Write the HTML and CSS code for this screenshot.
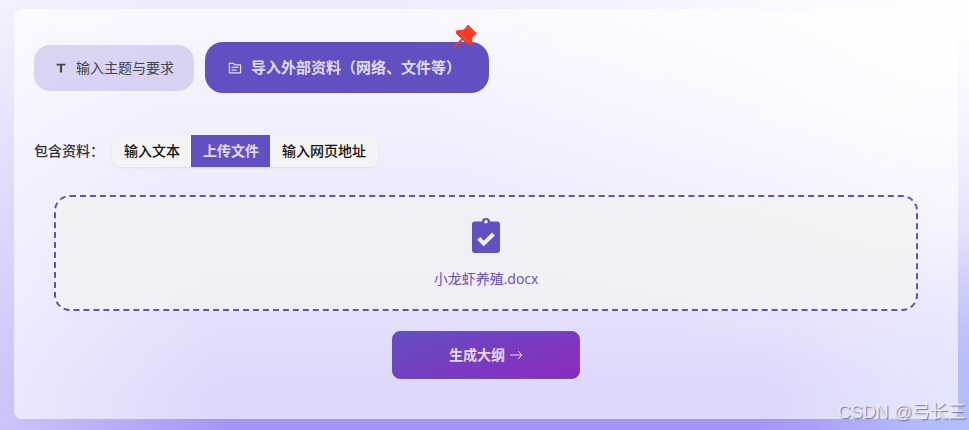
FILE: index.html
```html
<!DOCTYPE html>
<html lang="zh-CN">
<head>
<meta charset="utf-8">
<meta name="viewport" content="width=device-width, initial-scale=1">
<title>生成大纲</title>
<link rel="stylesheet" href="styles.css">
</head>
<body>
<main class="panel">
  <nav class="tabs">
    <button type="button" class="tab">
      <svg class="tab-icon" viewBox="0 0 16 16" aria-hidden="true"><path d="M3 3h10v2.200H9.200V13H6.800V5.200H3z" fill="currentColor"/></svg>
      输入主题与要求
    </button>
    <button type="button" class="tab tab-active">
      <svg class="tab-icon" viewBox="0 0 16 16" aria-hidden="true"><path d="M1.600 2.700h4.600l1.600 1.800h6.600v9H1.600zM4 7.200h8M4 10.300h5.500" fill="none" stroke="currentColor" stroke-width="1.400" stroke-linejoin="round"/></svg>
      导入外部资料（网络、文件等）
      <svg class="pin" viewBox="0 0 24 24" aria-hidden="true"><path d="M1 22.500 8 15.500" stroke="#f93822" stroke-width="2.200" stroke-linecap="round"/><path d="M14 1.200 22.300 9.300 18 13.500 16.700 21 11.500 18.200 2.500 9.500 2.300 7 10 6z" fill="#f93822" stroke="#f93822" stroke-linejoin="round"/><path d="M9.500 6.500 8 9.500M5 9 15.800 18.600M13.800 3.300 20.200 9.300" fill="none" stroke="#ff8a78" stroke-width=".5"/></svg>
    </button>
  </nav>

  <div class="source">
    <span class="source-label" id="source-label">包含资料：</span>
    <div class="segments" role="group" aria-labelledby="source-label">
      <button type="button" class="segment">输入文本</button>
      <button type="button" class="segment segment-active">上传文件</button>
      <button type="button" class="segment">输入网页地址</button>
    </div>
  </div>

  <button type="button" class="dropzone">
    <svg class="file-icon" viewBox="0 0 28 36" aria-hidden="true"><path fill="currentColor" fill-rule="evenodd" d="M3 4.500h6.700a4.400 4.400 0 0 1 8.600 0H25a3 3 0 0 1 3 3V33a3 3 0 0 1-3 3H3a3 3 0 0 1-3-3V7.500a3 3 0 0 1 3-3zM14 2.900a1.800 1.800 0 1 0 0 3.600 1.800 1.800 0 0 0 0-3.600zM5.200 22.800l6.500 6.500L23 18.400l-2.900-3-8.400 8.300-3.500-3.800z"/></svg>
    <span>小龙虾养殖.docx</span>
  </button>

  <button type="button" class="submit">
    生成大纲
    <svg class="arrow" viewBox="0 0 14 14" aria-hidden="true"><path d="M1 7h12M9 3l4 4-4 4" fill="none" stroke="currentColor"/></svg>
  </button>
</main>
<div class="watermark">CSDN @弓长三</div>
</body>
</html>
```
FILE: styles.css
```css
* {
  box-sizing: border-box;
}

body {
  margin: 0;
  min-height: 100vh;
  padding: 9px 11px 11px 14px;
  font: 14px/20px "Open Sans", "Noto Sans CJK SC", sans-serif;
  color: #303133;
  background:
    radial-gradient(ellipse 22% 45% at 100% 100%, #b2c0fc, rgba(178, 192, 252, 0)),
    linear-gradient(80deg, rgba(255, 255, 255, .45), rgba(255, 255, 255, 0) 22%),
    radial-gradient(ellipse 60% 90% at 100% 0%, rgba(255, 255, 255, .95), rgba(255, 255, 255, 0)),
    linear-gradient(260deg, rgba(255, 255, 255, .3), rgba(255, 255, 255, 0) 22%),
    linear-gradient(#efecfe 0%, #d9d2fb 32%, #bfb4f7 65%, #a797f4 92%, #a595f3 100%);
}

button {
  margin: 0;
  border: 0;
  font: inherit;
  color: inherit;
  cursor: pointer;
}

.panel {
  display: flex;
  flex-direction: column;
  padding: 33px 20px 40px;
  border-radius: 8px;
  background: rgba(255, 255, 255, .62);
}

.tabs {
  display: flex;
  align-items: center;
  gap: 11px;
}

.tab {
  position: relative;
  display: flex;
  align-items: center;
  gap: 8px;
  padding: 13px 20px;
  border-radius: 16px;
  color: #444;
  background: rgba(98, 79, 194, .2);
}

.tab-icon {
  width: 14px;
  height: 14px;
}

.tab-active {
  gap: 9px;
  padding: 16px 28px 16px 23px;
  border-radius: 18px;
  font-size: 15px;
  font-weight: 700;
  line-height: 19px;
  color: #e0dcf5;
  background: #624fc2;
}

.pin {
  position: absolute;
  top: -18px;
  right: 11px;
  width: 24px;
  height: 24px;
}

.source {
  display: flex;
  align-items: center;
  gap: 8px;
  margin-top: 42px;
}

.source-label {
  font-weight: 500;
}

.segments {
  display: flex;
  border-radius: 8px;
  box-shadow: 0 1px 2px rgba(0, 0, 0, .08);
}

.segment {
  padding: 6px 12px;
  font-weight: 500;
  color: #111;
  background: #f3f3f3;
}

.segment + .segment {
  margin-left: -1px;
}

.segment:first-child {
  border-radius: 8px 0 0 8px;
}

.segment:last-child {
  border-radius: 0 8px 8px 0;
}

.segment.segment-active {
  font-weight: 700;
  color: #e0dcf5;
  background: #624fc2;
}

.dropzone {
  display: flex;
  flex-direction: column;
  align-items: center;
  gap: 16px;
  margin: 28px 20px 20px;
  padding: 20px;
  border: 2px dashed #624fc2;
  border-radius: 16px;
  color: #624fc2;
  background: rgba(242, 242, 242, .8);
}

.file-icon {
  width: 28px;
  height: 36px;
}

.submit {
  display: flex;
  align-items: center;
  justify-content: center;
  gap: 4px;
  align-self: center;
  padding: 13px 56px;
  border: 1px solid #624fc2;
  border-radius: 8px;
  font-weight: 700;
  color: #e0dcf5;
  background: linear-gradient(160deg, #624fc2, #8d29c0);
}

.arrow {
  width: 14px;
  height: 14px;
}

.watermark {
  position: absolute;
  right: 3px;
  bottom: 6px;
  font: 18px/24px "Liberation Sans", "Noto Sans CJK SC", sans-serif;
  color: rgba(240, 240, 246, .9);
  text-shadow: 1px 1px 1px rgba(90, 90, 120, .8);
}
```
